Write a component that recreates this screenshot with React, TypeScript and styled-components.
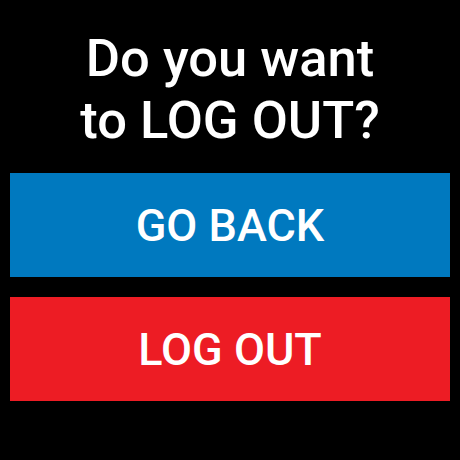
import React from "react";
import styled, { createGlobalStyle } from "styled-components";

const GlobalStyle = createGlobalStyle`
  html, body {
    margin: 0;
    padding: 0;
    background: #000;
  }
`;

const Screen = styled.div`
  width: 460px;
  height: 460px;
  box-sizing: border-box;
  background: #000;
  padding: 0 10px;
  display: flex;
  flex-direction: column;
  font-family: Roboto, "Liberation Sans", sans-serif;
  color: #fff;
`;

const Title = styled.h1`
  margin: 0;
  box-sizing: border-box;
  height: 173px;
  padding-top: 4px;
  display: flex;
  align-items: center;
  justify-content: center;
  text-align: center;
  font-size: 52.5px;
  font-weight: 500;
  line-height: 62px;
`;

const Actions = styled.div`
  display: flex;
  flex-direction: column;
  gap: 20px;
`;

const ActionButton = styled.button<{ $bg: string }>`
  height: 104px;
  border: 0;
  margin: 0;
  padding: 0;
  background: ${(p) => p.$bg};
  color: #fff;
  font-family: Roboto, "Liberation Sans", sans-serif;
  font-size: 45px;
  font-weight: 500;
  cursor: pointer;
`;

export default function App() {
  return (
    <>
      <GlobalStyle />
      <Screen>
        <Title>
          Do you want
          <br />
          to LOG OUT?
        </Title>
        <Actions>
          <ActionButton $bg="#0079bf">GO BACK</ActionButton>
          <ActionButton $bg="#ed1c24">LOG OUT</ActionButton>
        </Actions>
      </Screen>
    </>
  );
}
